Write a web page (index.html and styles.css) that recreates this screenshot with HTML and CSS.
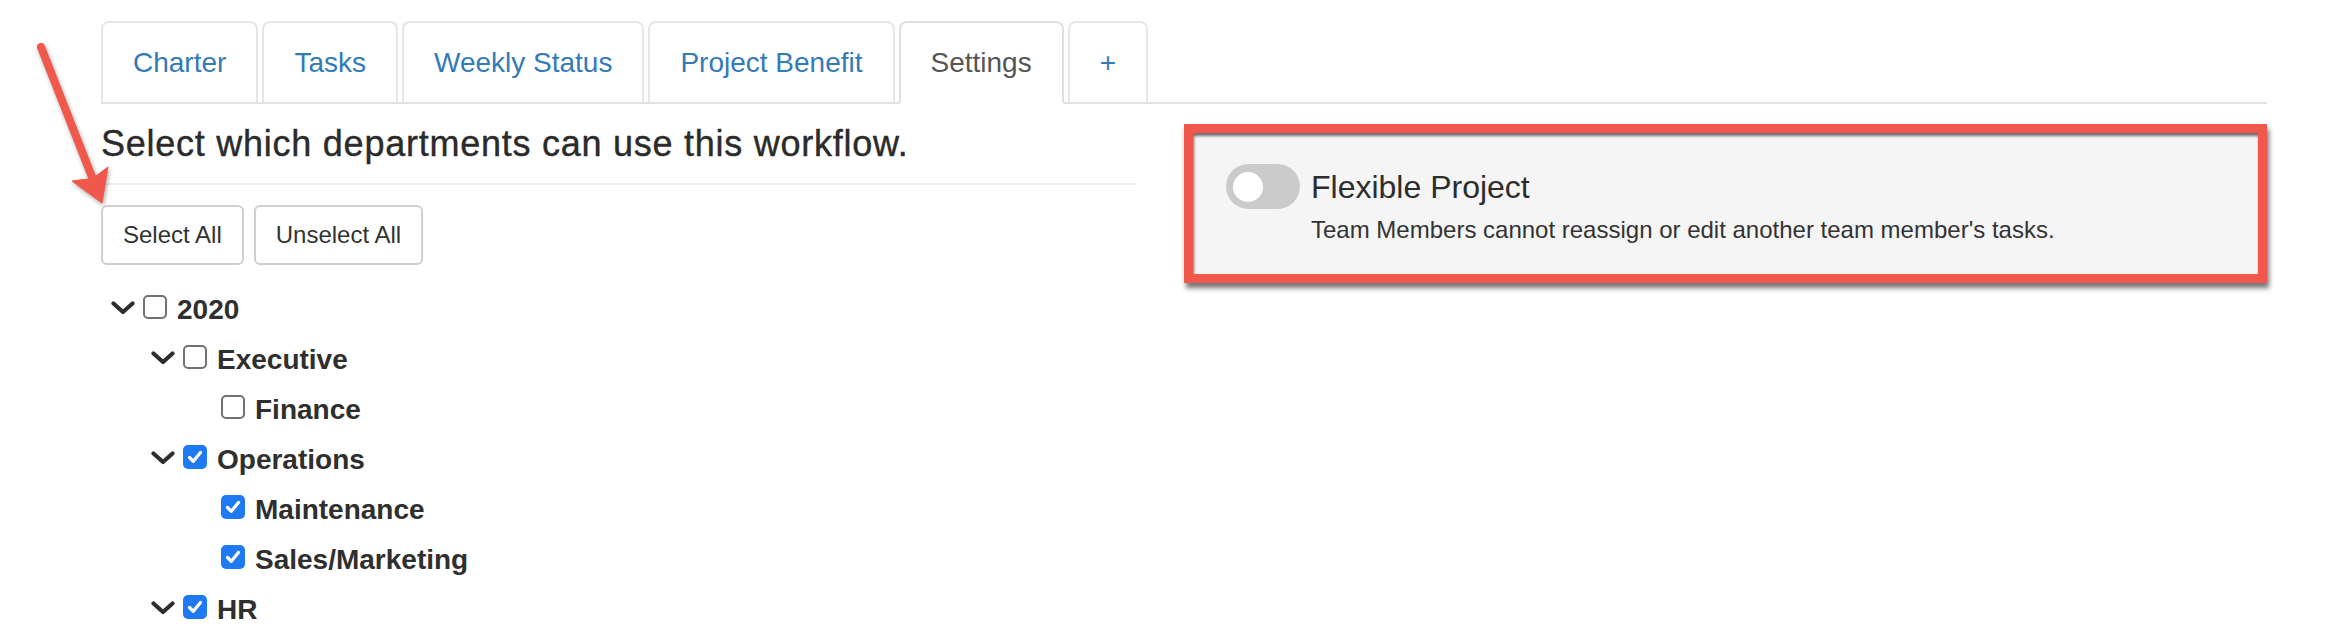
FILE: index.html
```html
<!DOCTYPE html>
<html lang="en">
<head>
<meta charset="utf-8">
<title>Settings</title>
<link rel="stylesheet" href="styles.css">
</head>
<body>
<div class="page">
  <ul class="tabs">
    <li class="tab"><a class="tab-link">Charter</a></li>
    <li class="tab"><a class="tab-link">Tasks</a></li>
    <li class="tab"><a class="tab-link">Weekly Status</a></li>
    <li class="tab"><a class="tab-link">Project Benefit</a></li>
    <li class="tab active"><a class="tab-link">Settings</a></li>
    <li class="tab"><a class="tab-link">+</a></li>
  </ul>

  <div class="content">
    <section class="left">
      <h4 class="title">Select which departments can use this workflow.</h4>
      <hr class="rule">
      <div class="btns">
        <button class="btn">Select All</button>
        <button class="btn">Unselect All</button>
      </div>
      <ul class="tree">
        <li class="node lvl0">
          <span class="chev"><svg viewBox="0 0 24 14" width="24" height="14"><polyline points="2.5,2.5 12,11 21.5,2.5"/></svg></span>
          <span class="cb"></span>
          <span class="label">2020</span>
        </li>
        <li class="node lvl1">
          <span class="chev"><svg viewBox="0 0 24 14" width="24" height="14"><polyline points="2.5,2.5 12,11 21.5,2.5"/></svg></span>
          <span class="cb"></span>
          <span class="label">Executive</span>
        </li>
        <li class="node lvl2">
          <span class="leaf"></span>
          <span class="cb"></span>
          <span class="label">Finance</span>
        </li>
        <li class="node lvl1">
          <span class="chev"><svg viewBox="0 0 24 14" width="24" height="14"><polyline points="2.5,2.5 12,11 21.5,2.5"/></svg></span>
          <span class="cb on"><svg viewBox="0 0 24 24" width="24" height="24"><polyline points="6.5,12.5 10.3,16.3 17.5,7.5"/></svg></span>
          <span class="label">Operations</span>
        </li>
        <li class="node lvl2">
          <span class="leaf"></span>
          <span class="cb on"><svg viewBox="0 0 24 24" width="24" height="24"><polyline points="6.5,12.5 10.3,16.3 17.5,7.5"/></svg></span>
          <span class="label">Maintenance</span>
        </li>
        <li class="node lvl2">
          <span class="leaf"></span>
          <span class="cb on"><svg viewBox="0 0 24 24" width="24" height="24"><polyline points="6.5,12.5 10.3,16.3 17.5,7.5"/></svg></span>
          <span class="label">Sales/Marketing</span>
        </li>
        <li class="node lvl1">
          <span class="chev"><svg viewBox="0 0 24 14" width="24" height="14"><polyline points="2.5,2.5 12,11 21.5,2.5"/></svg></span>
          <span class="cb on"><svg viewBox="0 0 24 24" width="24" height="24"><polyline points="6.5,12.5 10.3,16.3 17.5,7.5"/></svg></span>
          <span class="label">HR</span>
        </li>
      </ul>
    </section>

    <section class="right">
      <div class="highlight">
        <div class="well">
          <span class="toggle"><span class="knob"></span></span>
          <div class="well-text">
            <div class="well-title">Flexible Project</div>
            <div class="well-desc">Team Members cannot reassign or edit another team member's tasks.</div>
          </div>
        </div>
      </div>
    </section>
  </div>

  <svg class="arrow" viewBox="0 0 130 220" width="130" height="220">
    <line x1="41" y1="47" x2="92" y2="177"/>
    <polygon points="102,203 108,167 92.5,178.5 72,181"/>
  </svg>
</div>
</body>
</html>
```

FILE: styles.css
```css
* {
  box-sizing: border-box;
}

html,
body {
  margin: 0;
  padding: 0;
  background: #fff;
}

body {
  font-family: "Liberation Sans", Arial, Helvetica, sans-serif;
  color: #333;
  width: 2326px;
  height: 634px;
  overflow: hidden;
}

.page {
  position: relative;
  padding: 21px 59px 0 101px;
}

/* Tabs */
.tabs {
  display: flex;
  list-style: none;
  margin: 0;
  padding: 0;
  border-bottom: 2px solid #e2e2e2;
}

.tab {
  margin-right: 4px;
}

.tab-link {
  display: block;
  padding: 20px 30px 19px;
  line-height: 40px;
  font-size: 28px;
  color: #337ab7;
  background: #fff;
  border: 2px solid #e6e6e6;
  border-bottom: none;
  border-radius: 8px 8px 0 0;
}

.tab.active .tab-link {
  color: #555;
  border-color: #e0e0e0;
  border-bottom: 2px solid #fff;
  margin-bottom: -2px;
}

/* Content */
.content {
  display: grid;
  grid-template-columns: 1035px 1fr;
  column-gap: 48px;
}

.title {
  margin: 20px 0 0;
  font-size: 36px;
  line-height: 39.6px;
  font-weight: normal;
  letter-spacing: 0.75px;
  color: #2b2b2b;
  -webkit-text-stroke: 0.4px #2b2b2b;
}

.rule {
  margin: 19px 0 20px;
  border: 0;
  border-top: 2px solid #eeeeee;
  height: 0;
}

.btns {
  display: flex;
  gap: 10px;
}

.btn {
  font-family: "Liberation Sans", Arial, Helvetica, sans-serif;
  font-size: 24px;
  line-height: 36px;
  padding: 10px 20px;
  color: #333;
  background: #fff;
  border: 2px solid #cfcfcf;
  border-radius: 6px;
}

/* Tree */
.tree {
  list-style: none;
  margin: 17px 0 0;
  padding: 0 0 0 10px;
}

.node {
  display: flex;
  align-items: center;
  height: 50px;
}

.lvl1 {
  padding-left: 40px;
}

.lvl2 {
  padding-left: 80px;
}

.chev {
  display: flex;
  width: 32px;
  flex: none;
  margin-top: 2px;
}

.chev svg {
  fill: none;
  stroke: #2e2e2e;
  stroke-width: 4.2;
  stroke-linecap: round;
  stroke-linejoin: round;
}

.leaf {
  width: 30px;
  flex: none;
}

.cb {
  width: 24px;
  height: 24px;
  flex: none;
  border: 2px solid #727272;
  border-radius: 5px;
  background: #fff;
  display: flex;
}

.cb.on {
  border: 0;
  background: #1f7af2;
}

.cb svg {
  fill: none;
  stroke: #fff;
  stroke-width: 3.2;
  stroke-linecap: round;
  stroke-linejoin: round;
}

.label {
  margin-left: 10px;
  margin-top: 6px;
  font-size: 28px;
  line-height: 28px;
  font-weight: bold;
  color: #2f2f2f;
}

/* Right panel */
.highlight {
  margin-top: 20px;
  height: 159px;
  border: 9px solid #f0584b;
  box-shadow: 2px 5px 5px rgba(0, 0, 0, 0.55), inset 1px 3px 3px rgba(0, 0, 0, 0.55);
  background: #f5f5f5;
}

.well {
  display: flex;
  align-items: flex-start;
  padding: 31px 20px 0 33px;
}

.toggle {
  position: relative;
  width: 74px;
  height: 45px;
  flex: none;
  border-radius: 23px;
  background: #cbcbcb;
  margin-right: 11px;
}

.knob {
  position: absolute;
  left: 7px;
  top: 7.5px;
  width: 30px;
  height: 30px;
  border-radius: 50%;
  background: #fff;
}

.well-text {
  padding-top: 3px;
}

.well-title {
  font-size: 32px;
  line-height: 40px;
  color: #2d2d2d;
}

.well-desc {
  margin-top: 6px;
  font-size: 24px;
  line-height: 34px;
  color: #333;
}

/* Annotation arrow */
.arrow {
  position: absolute;
  left: 0;
  top: 0;
  overflow: visible;
  filter: drop-shadow(1px 2px 2px rgba(0, 0, 0, 0.35));
}

.arrow line {
  stroke: #f0584b;
  stroke-width: 8;
  stroke-linecap: round;
}

.arrow polygon {
  fill: #f0584b;
  stroke: #f0584b;
  stroke-width: 1;
  stroke-linejoin: round;
}
```
